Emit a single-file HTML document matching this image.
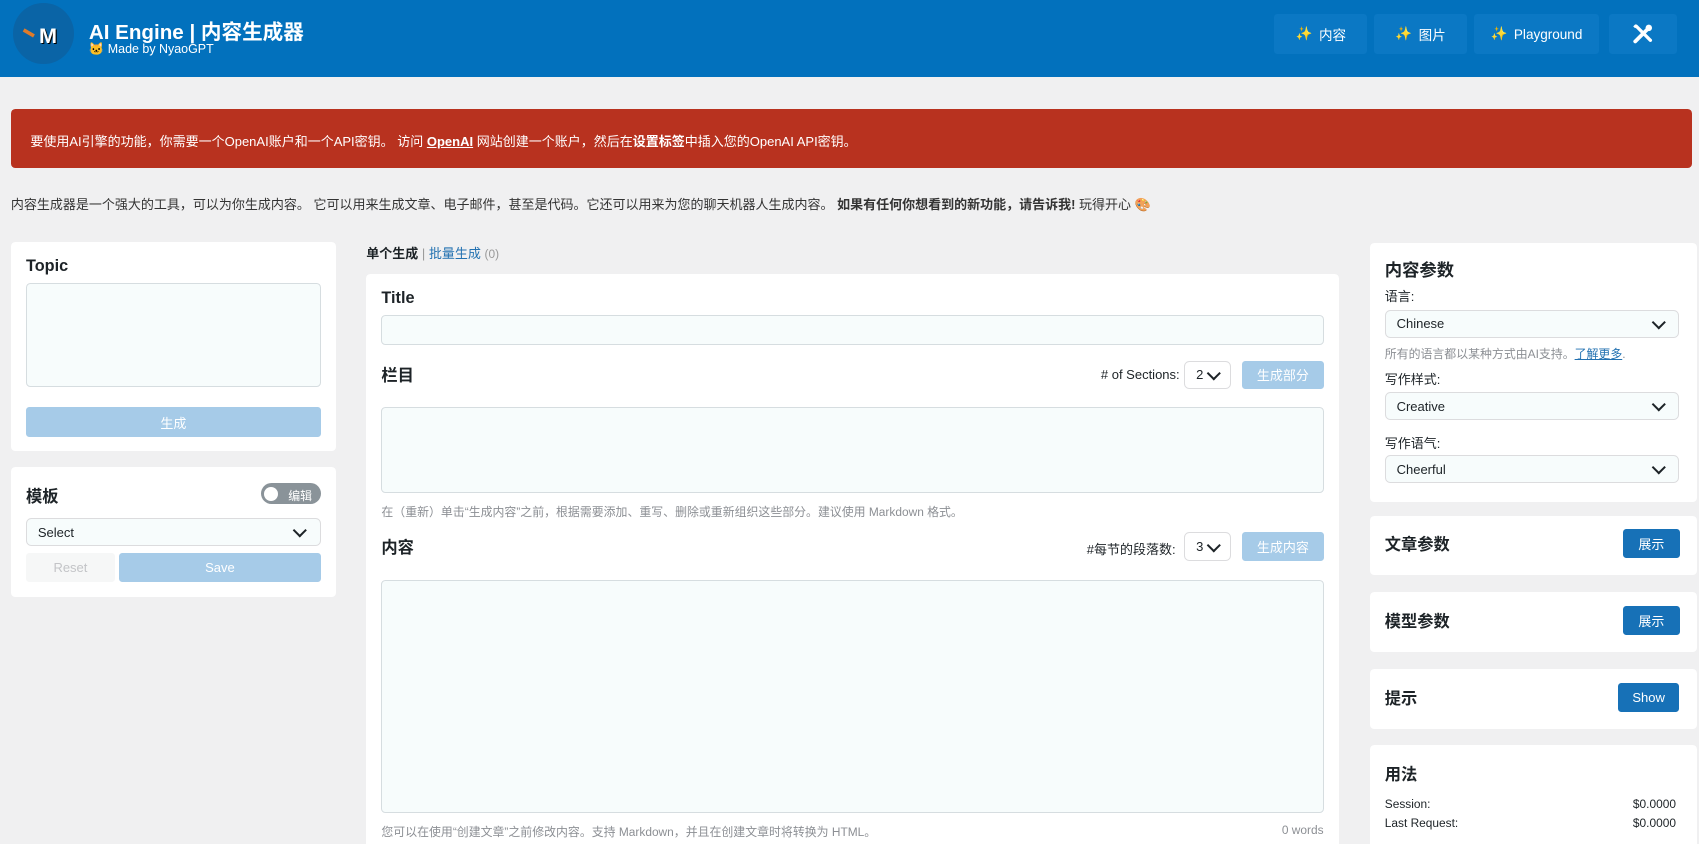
<!DOCTYPE html>
<html><head><meta charset="utf-8"><style>
*{box-sizing:border-box;margin:0;padding:0}
html,body{width:1699px;height:844px;overflow:hidden;background:#f0f0f1}
#w{zoom:1.08355;width:1568px;height:779px;position:relative;font-family:"Liberation Sans","Noto Sans CJK SC",sans-serif;color:#1d2327;font-size:12px}
.a{position:absolute}
.hd{left:0;top:0;width:1568px;height:71px;background:#0271bd}
.nb{top:13px;height:37px;background:#0b78c4;border-radius:3px;color:#fff;font-size:12.5px;display:flex;align-items:center;justify-content:center;gap:6px}
.card{background:#fff;border-radius:4px}
.h{font-weight:bold;font-size:15px;color:#1d2327}
.ta{background:#f7fcfc;border:1px solid #d6dde0;border-radius:4px}
.sel{background:#f7fcfc;border:1px solid #dcdcde;border-radius:5px;font-size:12px;display:flex;align-items:center;padding-left:10px}
.sel:after{content:"";position:absolute;right:14px;top:50%;width:7px;height:7px;border-right:2px solid #1d2327;border-bottom:2px solid #1d2327;transform:translateY(-70%) rotate(45deg)}
.sm:after{right:10px}
.bd{background:#a6cbe8;color:#fff;border-radius:3px;font-size:12px;display:flex;align-items:center;justify-content:center}
.bb{background:#1771b7;color:#fff;border-radius:3px;font-size:12px;display:flex;align-items:center;justify-content:center}
.g{color:#8c8f94;font-size:11px}
</style></head><body><div id="w">
<div class="a hd"></div>
<div class="a" style="left:12px;top:3px;width:56px;height:56px;border-radius:50%;background:#0a64a6"></div>
<div class="a" style="left:22px;top:22px;font-size:11px;color:#e07b2a;transform:rotate(30deg)">▬</div>
<div class="a" style="left:36px;top:21px;color:#fff;font-weight:bold;font-size:20px;text-shadow:1px 1px 0 #000">M</div>
<div class="a" style="left:82px;top:14px;color:#fff;font-weight:bold;font-size:19px">AI Engine | 内容生成器</div>
<div class="a" style="left:82px;top:39px;color:#fff;font-size:11.5px">🐱 Made by NyaoGPT</div>
<div class="a nb" style="left:1176px;width:86px"><span>✨</span>内容</div>
<div class="a nb" style="left:1268px;width:86px"><span>✨</span>图片</div>
<div class="a nb" style="left:1360px;width:116px"><span>✨</span>Playground</div>
<div class="a nb" style="left:1485px;width:63px"><svg width="20" height="20" viewBox="0 0 20 20"><path d="M3 17L15 5" stroke="#fff" stroke-width="3.5" stroke-linecap="round"/><circle cx="15.5" cy="4.5" r="3" fill="#fff"/><path d="M4 3L17 16" stroke="#fff" stroke-width="3" stroke-linecap="round"/><path d="M2 4L4 2" stroke="#fff" stroke-width="2.5"/></svg></div>
<div class="a" style="left:10px;top:101px;width:1552px;height:54px;background:#b8321f;border-radius:4px;color:#fff;font-size:12px;padding:20px 18px">要使用AI引擎的功能，你需要一个OpenAI账户和一个API密钥。 访问 <b><u>OpenAI</u></b> 网站创建一个账户，然后在<b>设置标签</b>中插入您的OpenAI API密钥。</div>
<div class="a" style="left:10px;top:179px;font-size:12px;color:#333">内容生成器是一个强大的工具，可以为你生成内容。 它可以用来生成文章、电子邮件，甚至是代码。它还可以用来为您的聊天机器人生成内容。 <b>如果有任何你想看到的新功能，请告诉我!</b> 玩得开心 🎨</div>

<div class="a card" style="left:10px;top:223px;width:300px;height:193px"></div>
<div class="a h" style="left:24px;top:237px">Topic</div>
<div class="a ta" style="left:24px;top:261px;width:272px;height:96px"></div>
<div class="a bd" style="left:24px;top:376px;width:272px;height:27px">生成</div>
<div class="a card" style="left:10px;top:431px;width:300px;height:120px"></div>
<div class="a h" style="left:24px;top:446px">模板</div>
<div class="a" style="left:241px;top:446px;width:55px;height:19px;background:#8a9399;border-radius:10px;color:#fff;font-size:11px;padding:3px 0 0 25px">编辑</div>
<div class="a" style="left:244px;top:449px;width:13px;height:13px;border-radius:50%;background:#fff"></div>
<div class="a sel" style="left:24px;top:478px;width:272px;height:26px">Select</div>
<div class="a" style="left:24px;top:510px;width:82px;height:27px;background:#f6f7f7;color:#c3c4c7;border-radius:3px;display:flex;align-items:center;justify-content:center">Reset</div>
<div class="a bd" style="left:110px;top:510px;width:186px;height:27px">Save</div>

<div class="a" style="left:338px;top:224px;font-size:12px"><b>单个生成</b> <span style="color:#999">|</span> <span style="color:#2271b1">批量生成</span> <span style="color:#999;font-size:11px">(0)</span></div>
<div class="a card" style="left:338px;top:253px;width:898px;height:540px"></div>
<div class="a h" style="left:352px;top:267px">Title</div>
<div class="a ta" style="left:352px;top:291px;width:870px;height:27px"></div>
<div class="a h" style="left:352px;top:334px">栏目</div>
<div class="a" style="left:1016px;top:339px;font-size:12px">#&nbsp;of Sections:</div>
<div class="a sel sm" style="left:1093px;top:333px;width:43px;height:26px;background:#fff">2</div>
<div class="a bd" style="left:1146px;top:333px;width:76px;height:26px">生成部分</div>
<div class="a ta" style="left:352px;top:376px;width:870px;height:79px"></div>
<div class="a g" style="left:352px;top:464px">在（重新）单击“生成内容”之前，根据需要添加、重写、删除或重新组织这些部分。建议使用 Markdown 格式。</div>
<div class="a h" style="left:352px;top:493px">内容</div>
<div class="a" style="left:1003px;top:497px;font-size:12px">#每节的段落数:</div>
<div class="a sel sm" style="left:1093px;top:491px;width:43px;height:27px;background:#fff">3</div>
<div class="a bd" style="left:1146px;top:491px;width:76px;height:27px">生成内容</div>
<div class="a ta" style="left:352px;top:535px;width:870px;height:215px"></div>
<div class="a g" style="left:352px;top:760px">您可以在使用“创建文章”之前修改内容。支持 Markdown，并且在创建文章时将转换为 HTML。</div>
<div class="a g" style="left:1183px;top:760px">0 words</div>

<div class="a card" style="left:1264px;top:224px;width:302px;height:239px"></div>
<div class="a h" style="left:1278px;top:236px;font-size:16px">内容参数</div>
<div class="a" style="left:1278px;top:264px">语言:</div>
<div class="a sel" style="left:1278px;top:286px;width:272px;height:26px">Chinese</div>
<div class="a g" style="left:1278px;top:318px">所有的语言都以某种方式由AI支持。<u style="color:#2271b1">了解更多</u>.</div>
<div class="a" style="left:1278px;top:341px">写作样式:</div>
<div class="a sel" style="left:1278px;top:362px;width:272px;height:26px">Creative</div>
<div class="a" style="left:1278px;top:400px">写作语气:</div>
<div class="a sel" style="left:1278px;top:420px;width:272px;height:26px">Cheerful</div>
<div class="a card" style="left:1264px;top:476px;width:302px;height:55px"></div>
<div class="a h" style="left:1278px;top:490px">文章参数</div>
<div class="a bb" style="left:1498px;top:488px;width:52px;height:27px">展示</div>
<div class="a card" style="left:1264px;top:546px;width:302px;height:56px"></div>
<div class="a h" style="left:1278px;top:561px">模型参数</div>
<div class="a bb" style="left:1498px;top:559px;width:52px;height:27px">展示</div>
<div class="a card" style="left:1264px;top:617px;width:302px;height:56px"></div>
<div class="a h" style="left:1278px;top:632px">提示</div>
<div class="a bb" style="left:1493px;top:630px;width:57px;height:27px">Show</div>
<div class="a card" style="left:1264px;top:688px;width:302px;height:100px"></div>
<div class="a h" style="left:1278px;top:702px">用法</div>
<div class="a" style="left:1278px;top:736px;font-size:11px">Session:</div>
<div class="a" style="left:1507px;top:736px;font-size:11px">$0.0000</div>
<div class="a" style="left:1278px;top:753px;font-size:11px">Last Request:</div>
<div class="a" style="left:1507px;top:753px;font-size:11px">$0.0000</div>
</div></body></html>
